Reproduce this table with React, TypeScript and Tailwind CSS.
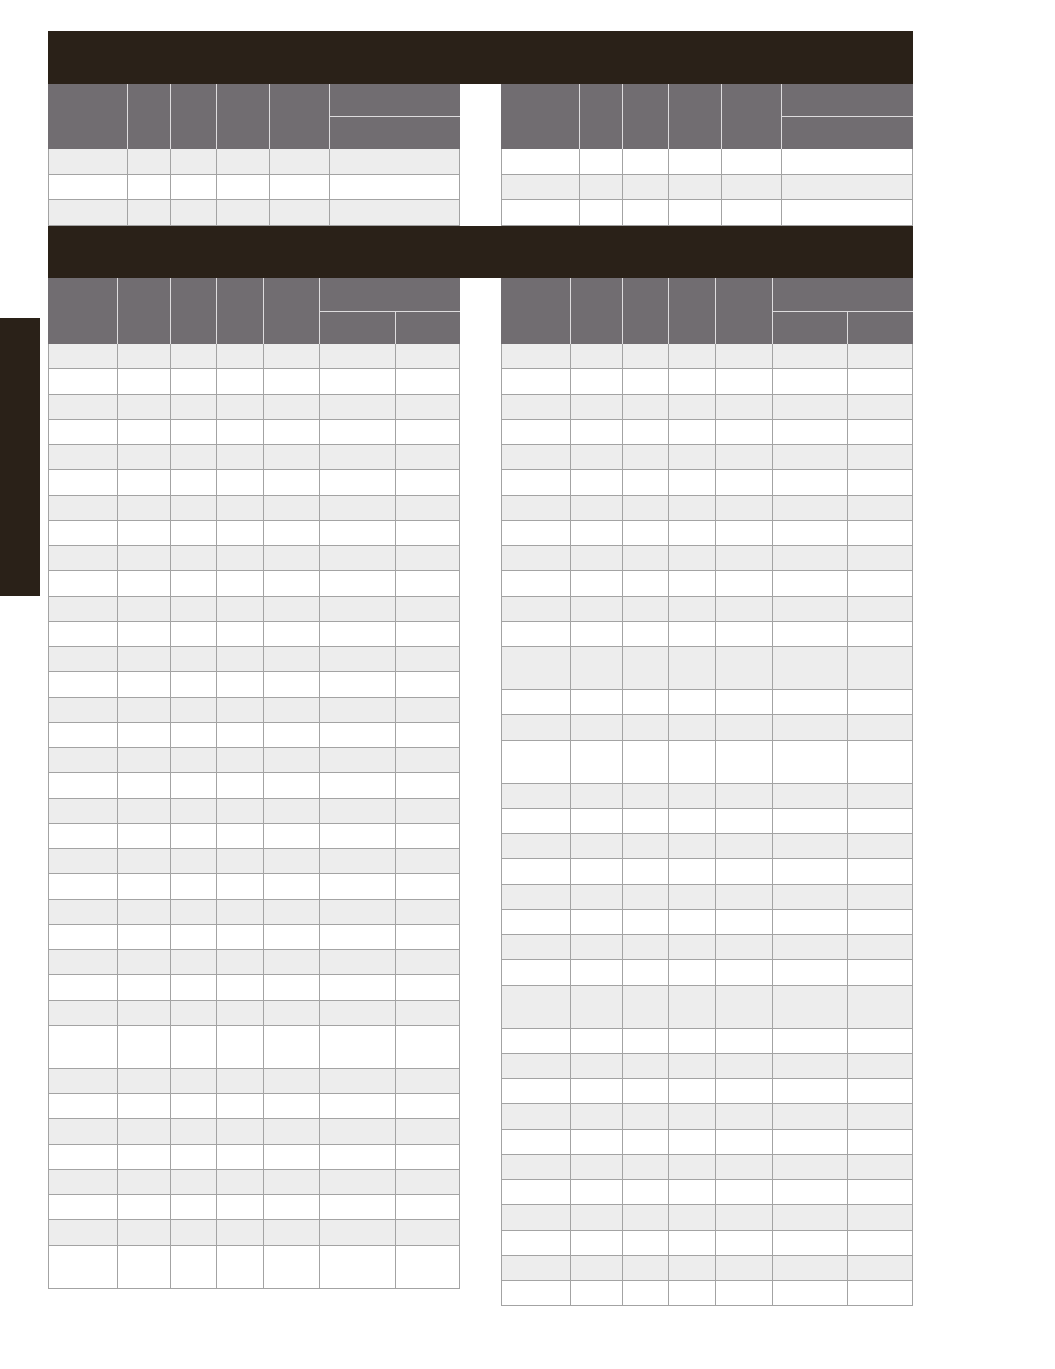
type RowKind = 'n' | 't';

type TableProps = {
  cols: string[];
  group: number;
  headH: string;
  groupTopH: string;
  rowH: string;
  rows: RowKind[];
  lightFirst: boolean;
};

const line = 'border-[#a3a3a3]';
const headLine = 'border-[#dedcde]';

function rowsOf(spec: [number, RowKind][]): RowKind[] {
  const out: RowKind[] = [];
  spec.forEach(([count, kind]) => {
    for (let i = 0; i < count; i++) out.push(kind);
  });
  return out;
}

function Table({ cols, group, headH, groupTopH, rowH, rows, lightFirst }: TableProps) {
  const plain = cols.slice(0, cols.length - group);
  const grouped = cols.slice(cols.length - group);

  return (
    <div className="w-[412px] shrink-0">
      <div className={`flex ${headH} bg-[#716d71]`}>
        {plain.map((w, i) => (
          <div key={i} className={`${w} shrink-0 ${i > 0 ? `border-l ${headLine}` : ''}`} />
        ))}
        <div className={`flex flex-1 flex-col border-l ${headLine}`}>
          <div className={`${groupTopH} shrink-0 border-b ${headLine}`} />
          <div className="flex flex-1">
            {grouped.map((w, i) => (
              <div
                key={i}
                className={`${i === 0 ? 'flex-1' : w} shrink-0 ${i > 0 ? `border-l ${headLine}` : ''}`}
              />
            ))}
          </div>
        </div>
      </div>

      {rows.map((kind, r) => {
        const light = (r % 2 === 0) === lightFirst;
        return (
          <div
            key={r}
            className={`flex ${kind === 't' ? 'h-[43px]' : rowH} border-b ${line} ${
              light ? 'bg-[#ededed]' : 'bg-white'
            }`}
          >
            {cols.map((w, i) => (
              <div
                key={i}
                className={`${w} shrink-0 border-l ${line} ${i === cols.length - 1 ? 'border-r' : ''}`}
              />
            ))}
          </div>
        );
      })}
    </div>
  );
}

const topLeftCols = ['w-[79px]', 'w-[43px]', 'w-[46px]', 'w-[53px]', 'w-[60px]', 'w-[131px]'];
const topRightCols = ['w-[78px]', 'w-[43px]', 'w-[46px]', 'w-[53px]', 'w-[60px]', 'w-[132px]'];
const mainLeftCols = ['w-[69px]', 'w-[53px]', 'w-[46px]', 'w-[47px]', 'w-[56px]', 'w-[76px]', 'w-[65px]'];
const mainRightCols = ['w-[69px]', 'w-[52px]', 'w-[46px]', 'w-[47px]', 'w-[57px]', 'w-[75px]', 'w-[66px]'];

const leftRows = rowsOf([
  [27, 'n'],
  [1, 't'],
  [7, 'n'],
  [1, 't'],
]);

const rightRows = rowsOf([
  [12, 'n'],
  [1, 't'],
  [2, 'n'],
  [1, 't'],
  [8, 'n'],
  [1, 't'],
  [11, 'n'],
]);

export default function App() {
  return (
    <div className="flex min-h-[1369px] w-[1055px] bg-white font-['Liberation_Sans',Arial,sans-serif]">
      <aside className="w-[40px] shrink-0 pt-[318px]">
        <div className="h-[278px] bg-[#2a2118]" />
      </aside>

      <main className="ml-[8px] w-[865px] pt-[31px]">
        <div className="h-[53px] bg-[#2a2118]" />
        <div className="flex gap-[41px]">
          <Table
            cols={topLeftCols}
            group={1}
            headH="h-[65px]"
            groupTopH="h-[33px]"
            rowH="h-[25.5px]"
            rows={['n', 'n', 'n']}
            lightFirst
          />
          <Table
            cols={topRightCols}
            group={1}
            headH="h-[65px]"
            groupTopH="h-[33px]"
            rowH="h-[25.5px]"
            rows={['n', 'n', 'n']}
            lightFirst={false}
          />
        </div>

        <div className="h-[52px] bg-[#2a2118]" />
        <div className="flex gap-[41px]">
          <Table
            cols={mainLeftCols}
            group={2}
            headH="h-[66.5px]"
            groupTopH="h-[34.5px]"
            rowH="h-[25.26px]"
            rows={leftRows}
            lightFirst
          />
          <Table
            cols={mainRightCols}
            group={2}
            headH="h-[66.5px]"
            groupTopH="h-[34.5px]"
            rowH="h-[25.26px]"
            rows={rightRows}
            lightFirst
          />
        </div>
      </main>
    </div>
  );
}
